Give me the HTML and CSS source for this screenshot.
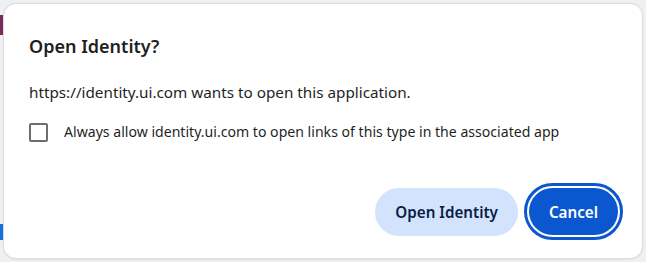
FILE: index.html
```html
<!DOCTYPE html>
<html lang="en">

<head>
    <meta charset="UTF-8">
    <meta name="viewport" content="width=device-width, initial-scale=1.0">
    <title>Open Identity?</title>
    <link rel="stylesheet" href="styles.css">
</head>

<body>
    <div class="page">
        <div class="edge edge-top"></div>
        <div class="edge edge-bottom"></div>

        <div class="dialog">
            <h1 class="title">Open Identity?</h1>
            <p class="message">https://identity.ui.com wants to open this application.</p>

            <label class="remember">
                <span class="box"></span>
                <span class="remember-text">Always allow identity.ui.com to open links of this type in the associated app</span>
            </label>

            <div class="actions">
                <button class="btn btn-open">Open Identity</button>
                <span class="focus-ring">
                    <button class="btn btn-cancel">Cancel</button>
                </span>
            </div>
        </div>
    </div>
</body>

</html>
```

FILE: styles.css
```css
* {
    box-sizing: border-box;
}

html,
body {
    margin: 0;
    height: 100%;
}

body {
    background: #eef0f3;
    font-family: "Noto Sans", "Open Sans", sans-serif;
    color: #1f1f1f;
    overflow: hidden;
}

.page {
    position: relative;
    height: 262px;
    padding: 4px;
}

/* bits of the page behind the dialog */
.edge {
    position: absolute;
    left: 0;
    width: 3px;
}

.edge-top {
    top: 15px;
    height: 20px;
    background: #7a2a5c;
}

.edge-bottom {
    top: 224px;
    height: 16px;
    background: #1a6fe0;
}

.dialog {
    position: relative;
    width: 638px;
    height: 254px;
    background: #fff;
    border-radius: 12px;
    box-shadow: 0 0 0 1px #dcdcdc, 0 1px 3px rgba(0, 0, 0, 0.12);
    padding: 30px 19px 18px 25px;
    display: flex;
    flex-direction: column;
}

.title {
    margin: 0;
    font-size: 18px;
    font-weight: 600;
    line-height: 24px;
    color: #1f1f1f;
}

.message {
    margin: 24px 0 0;
    font-size: 15.25px;
    line-height: 20px;
}

.remember {
    margin-top: 20px;
    display: flex;
    align-items: center;
    gap: 16px;
}

.box {
    width: 19px;
    height: 19px;
    border: 2px solid #6e6e6e;
    border-radius: 2px;
    flex: none;
}

.remember-text {
    font-size: 14.1px;
    line-height: 20px;
}

.actions {
    margin-top: auto;
    display: flex;
    justify-content: flex-end;
    align-items: center;
    gap: 6px;
}

.btn {
    font-family: inherit;
    font-size: 15.2px;
    font-weight: 600;
    border: 0;
    border-radius: 24px;
    height: 48px;
    padding: 0 20px;
    cursor: pointer;
}

.btn-open {
    background: #d3e3fd;
    color: #0a1d45;
}

.focus-ring {
    display: inline-flex;
    border: 3px solid #0b57d0;
    border-radius: 30px;
    padding: 2px;
}

.btn-cancel {
    background: #0b57d0;
    color: #fff;
    height: 47px;
}
```
